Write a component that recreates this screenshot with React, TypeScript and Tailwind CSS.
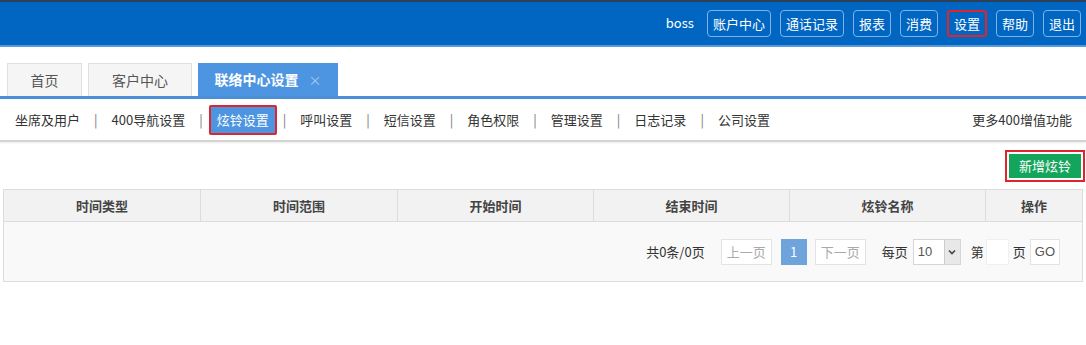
const topButtons = ["账户中心", "通话记录", "报表", "消费", "设置", "帮助", "退出"]
const subNav = ["坐席及用户", "400导航设置", "炫铃设置", "呼叫设置", "短信设置", "角色权限", "管理设置", "日志记录", "公司设置"]
const columns = [
    { label: "时间类型", w: "w-[197px]" },
    { label: "时间范围", w: "w-[197px]" },
    { label: "开始时间", w: "w-[196px]" },
    { label: "结束时间", w: "w-[196px]" },
    { label: "炫铃名称", w: "w-[196px]" },
    { label: "操作", w: "flex-1" },
]

const App = () => {
    return (
        <div className="w-[1086px] h-[345px] bg-white text-[13px] text-[#333] font-['Noto_Sans_CJK_SC','Noto_Sans',sans-serif] overflow-hidden">
            {/* header */}
            <div className="h-[47px] bg-[#0066c2] border-t-2 border-[#2c4058] border-b-2 border-b-[#5598dc] flex items-center justify-end pr-[5px]">
                <span className="text-white text-[13px] mr-[13px] mb-[1px]">boss</span>
                <div className="flex gap-[9px]">
                    {topButtons.map((b) => (
                        <span
                            key={b}
                            className={
                                b === "设置"
                                    ? "h-[27px] px-[5px] flex items-center rounded-[3px] border-2 border-[#e0242c] text-white"
                                    : "h-[27px] px-[5px] flex items-center rounded-[4px] border border-[#7fb2e6] text-white"
                            }
                        >
                            {b}
                        </span>
                    ))}
                </div>
            </div>

            {/* tabs */}
            <div className="pt-[16px] pl-[7px] flex gap-[6px] border-b-[3px] border-[#4a8fd8]">
                <div className="w-[75px] h-[33px] flex items-center justify-center bg-[#f5f5f5] border border-b-0 border-[#e0e0e0] text-[14px] text-[#555]">首页</div>
                <div className="w-[104px] h-[33px] flex items-center justify-center bg-[#f5f5f5] border border-b-0 border-[#e0e0e0] text-[14px] text-[#555]">客户中心</div>
                <div className="w-[140px] h-[33px] flex items-center justify-center gap-[10px] bg-[#4d95e0] text-[14px] font-bold text-white">
                    联络中心设置
                    <span className="text-[#a9cdf2] text-[13px] font-normal">×</span>
                </div>
            </div>

            {/* sub nav */}
            <div className="h-[43px] flex items-center justify-between pl-[15px] pr-[14px] border-b-2 border-[#d4d4d4] shadow-[0_1px_2px_rgba(0,0,0,0.08)]">
                <div className="flex items-center">
                    {subNav.map((s, i) => (
                        <div key={s} className="flex items-center">
                            {s === "炫铃设置" ? (
                                <span className="h-[30px] px-[6px] -mx-[8px] flex items-center bg-[#4d95e0] text-white border-2 border-[#e0242c] rounded-[2px]">{s}</span>
                            ) : (
                                <span>{s}</span>
                            )}
                            {i < subNav.length - 1 && <span className="mx-[14px] text-[#777]">|</span>}
                        </div>
                    ))}
                </div>
                <span>更多400增值功能</span>
            </div>

            {/* toolbar */}
            <div className="flex justify-end pt-[8px] pr-[1px] pb-[7px]">
                <div className="w-[80px] h-[32px] border-2 border-[#e0242c] p-[2px]">
                    <div className="w-full h-full bg-[#14a55c] text-white flex items-center justify-center">新增炫铃</div>
                </div>
            </div>

            {/* table */}
            <div className="mx-[3px] border border-[#dcdcdc]">
                <div className="flex h-[32px] bg-[#f2f2f2] border-b border-[#dcdcdc] font-bold text-[#444]">
                    {columns.map((c, i) => (
                        <div
                            key={c.label}
                            className={`${c.w} flex items-center justify-center ${i < columns.length - 1 ? "border-r border-[#dcdcdc]" : ""}`}
                        >
                            {c.label}
                        </div>
                    ))}
                </div>
                <div className="h-[59px] bg-[#f9f9f9] flex items-center justify-end pr-[22px] text-[13px]">
                    <span className="mr-[16px]">共0条/0页</span>
                    <span className="h-[26px] px-[5px] flex items-center border border-[#e3e3e3] bg-white text-[#aaa] mr-[9px]">上一页</span>
                    <span className="w-[26px] h-[26px] flex items-center justify-center bg-[#6fa3db] text-white mr-[8px]">1</span>
                    <span className="h-[26px] px-[5px] flex items-center border border-[#e3e3e3] bg-white text-[#aaa] mr-[16px]">下一页</span>
                    <span className="mr-[5px]">每页</span>
                    <div className="w-[48px] h-[26px] flex border border-[#d6d6d6] bg-white mr-[10px]">
                        <span className="flex-1 flex items-center pl-[4px] text-[#555] font-['Liberation_Sans',sans-serif]">10</span>
                        <span className="w-[16px] flex items-center justify-center bg-[#e8e8e8] border-l border-[#ccc]">
                            <svg width="8" height="6" viewBox="0 0 8 6"><path d="M1 1.5 L4 4.5 L7 1.5" stroke="#444" strokeWidth="1.6" fill="none" /></svg>
                        </span>
                    </div>
                    <span className="mr-[2px]">第</span>
                    <span className="w-[23px] h-[26px] bg-white border border-[#f0f0f0] mr-[4px]" />
                    <span className="mr-[4px]">页</span>
                    <span className="h-[26px] px-[4px] flex items-center border border-[#e3e3e3] bg-white text-[#555] font-['Liberation_Sans',sans-serif]">GO</span>
                </div>
            </div>
        </div>
    )
}

export default App
